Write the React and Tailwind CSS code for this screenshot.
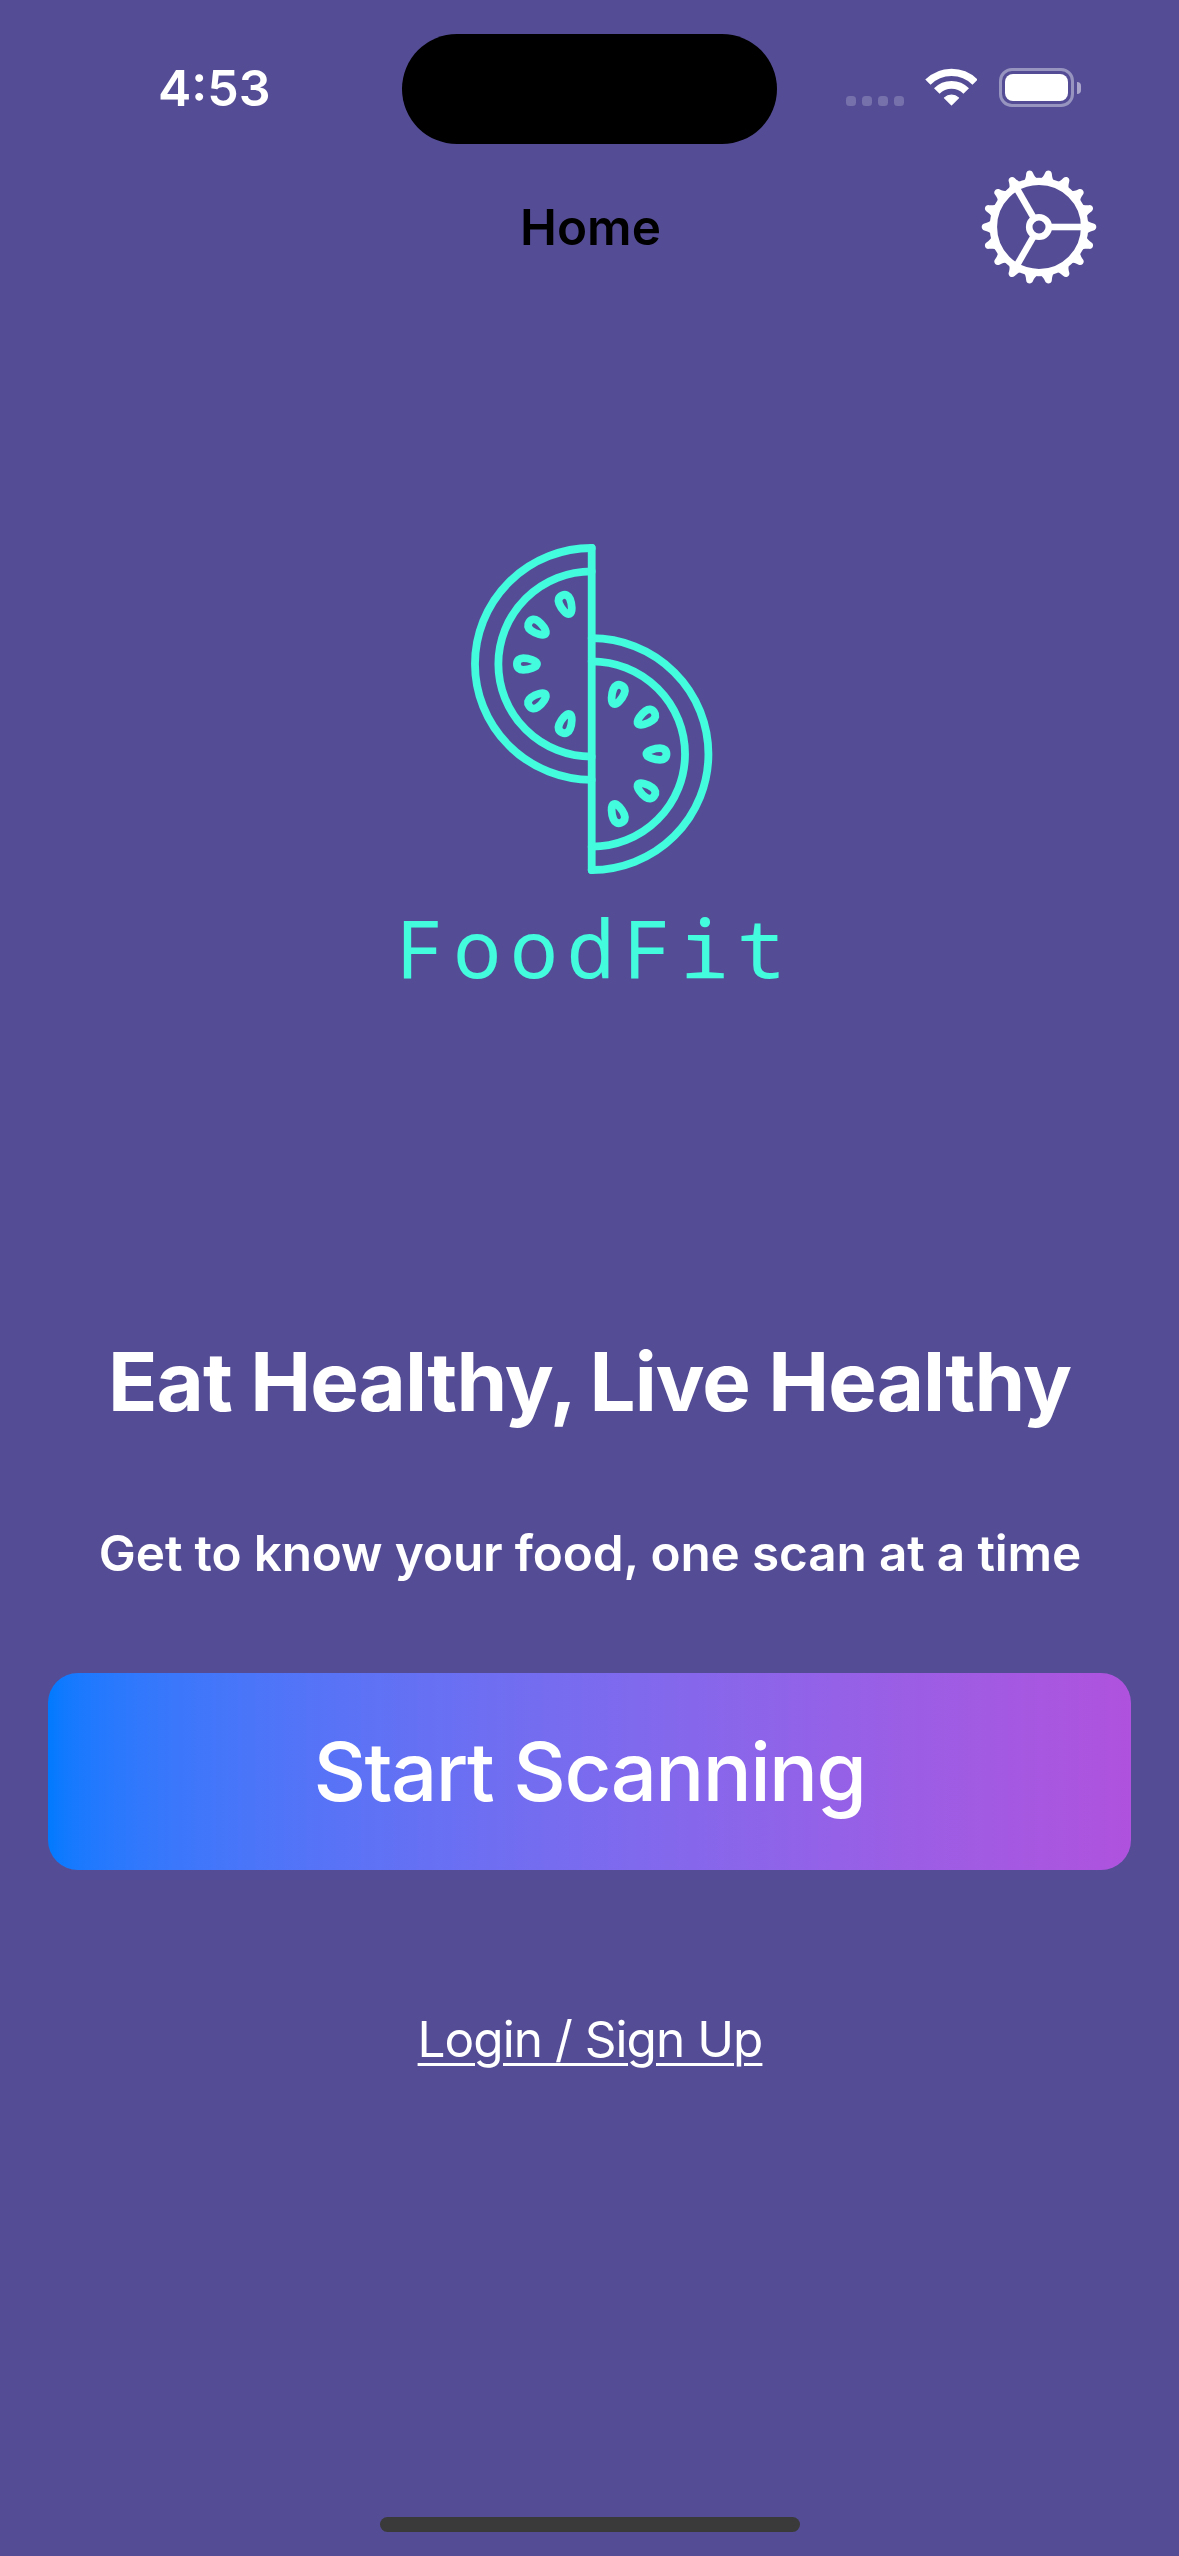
import React from "react";

const TEETH = Array.from({ length: 18 }, (_, i) => i * 20);

const SEEDS = [
  { x: 566, y: 604.6, angle: 68 },
  { x: 537.4, y: 627.8, angle: 36 },
  { x: 527, y: 664, angle: 0 },
  { x: 537.4, y: 700.2, angle: -36 },
  { x: 566, y: 723.4, angle: -68 },
];

function SignalDots() {
  return (
    <div className="flex gap-1.5">
      {[0, 1, 2, 3].map((i) => (
        <span key={i} className="size-2.5 rounded-[3.5px] bg-white/20" />
      ))}
    </div>
  );
}

function WifiIcon() {
  return (
    <svg className="h-[38px] w-[52px]" viewBox="-26.5 -37.5 52 38" fill="none" stroke="white">
      <path d="M-23.6 -23.3A33.2 33.2 0 0 1 23.6 -23.3" strokeWidth="7.4" />
      <path d="M-14.7 -14.5A20.6 20.6 0 0 1 14.7 -14.5" strokeWidth="7.8" />
      <path
        d="M0 -0.7L-7 -7.6A10.4 10.4 0 0 1 7 -7.6Z"
        fill="white"
        strokeWidth="1.2"
        strokeLinejoin="round"
      />
    </svg>
  );
}

function BatteryIcon() {
  return (
    <div className="flex items-center gap-[3px]">
      <div className="h-[39px] w-[75px] rounded-[13px] border-[3px] border-white/40 p-[3px]">
        <div className="h-[27px] w-[63px] rounded-[8px] bg-white" />
      </div>
      <div className="h-3 w-1 rounded-r-full bg-white/50" />
    </div>
  );
}

function GearIcon() {
  return (
    <svg className="size-[116px]" viewBox="-58 -58 116 116" fill="none" stroke="white">
      <circle r="45.6" strokeWidth="7.4" />
      <circle r="9.8" strokeWidth="6.6" />
      {[0, 120, 240].map((a) => (
        <path key={a} d="M12 0H43" strokeWidth="6.6" transform={`rotate(${a})`} />
      ))}
      {TEETH.map((a) => (
        <path
          key={a}
          transform={`rotate(${a})`}
          fill="white"
          stroke="none"
          d="M47 -7.4C49.5 -5.2 51 -4.3 54.6 -3.4C58.2 -2.6 58.2 2.6 54.6 3.4C51 4.3 49.5 5.2 47 7.4Z"
        />
      ))}
    </svg>
  );
}

function MelonHalf({ transform }) {
  return (
    <g transform={transform}>
      <path d="M591.8 548A116.8 115.9 0 0 0 591.8 779.8" />
      <path d="M591.8 571.3A93.4 92.7 0 0 0 591.8 756.7" />
      {SEEDS.map((s) => (
        <path
          key={s.y}
          transform={`translate(${s.x} ${s.y}) rotate(${s.angle})`}
          d="M10.1 0C10.1 3.4 1.8 5.9 -3.6 5.9C-7.6 5.9 -10 3.8 -10 0C-10 -3.8 -7.6 -5.9 -3.6 -5.9C1.8 -5.9 10.1 -3.4 10.1 0Z"
        />
      ))}
    </g>
  );
}

function Logo() {
  return (
    <svg
      className="h-[332px] w-[244px]"
      viewBox="470.1 543 244 332"
      fill="none"
      stroke="#43fbdd"
      strokeWidth="7.8"
      strokeLinejoin="round"
      strokeLinecap="round"
    >
      <MelonHalf />
      <MelonHalf transform="rotate(180 591.8 709)" />
      <path d="M591.8 548V870" />
    </svg>
  );
}

export default function App() {
  return (
    <div className="flex h-[2556px] w-[1179px] flex-col items-center bg-[#544d96] font-['Inter',sans-serif] text-white">
      <header className="grid h-[144px] w-full grid-cols-[402px_375px_402px] pt-[34px]">
        <div className="flex h-[108px] items-center pl-[158px] text-[50px] leading-none font-semibold">
          4:53
        </div>
        <div className="h-[110px] rounded-full bg-black" />
        <div className="flex h-[108px] items-start pt-[34px] pl-[69px]">
          <div className="pt-7">
            <SignalDots />
          </div>
          <div className="ml-[21px]">
            <WifiIcon />
          </div>
          <div className="ml-[22px]">
            <BatteryIcon />
          </div>
        </div>
      </header>

      <nav className="grid h-[166px] w-full grid-cols-3 items-center">
        <span />
        <h1 className="pt-px pl-[2px] text-center text-[49.5px] leading-none font-semibold text-black">
          Home
        </h1>
        <button className="justify-self-end pr-[82px]" aria-label="Settings">
          <GearIcon />
        </button>
      </nav>

      <main className="flex w-full flex-col items-center px-12 pt-[233px]">
        <div className="ml-1">
          <Logo />
        </div>
        <div className="mt-[22px] ml-[11px] h-[100px] font-['Noto_Sans_Mono','Liberation_Mono',monospace] text-[80.5px] leading-[100px] tracking-[8.5px] text-[#43fbdd]">
          FoodFit
        </div>

        <h2 className="mt-[335px] text-[81.5px] leading-[100px] font-bold tracking-[-0.93px] whitespace-nowrap">
          Eat Healthy,<span className="[word-spacing:-5px]"> Live</span> Healthy
        </h2>
        <p className="mt-[91px] ml-px text-[49.5px] leading-[60px] font-semibold tracking-[-0.15px] whitespace-nowrap">
          Get to know your food, one scan at a time
        </p>
        <button className="mt-[90px] flex h-[197px] w-full items-center justify-center rounded-[30px] bg-linear-to-r from-[#007aff] to-[#af52de] text-[81.5px] leading-none font-medium tracking-[-1.6px]">
          Start Scanning
        </button>
        <a className="mt-[139px] ml-px text-[49.5px] leading-[60px] tracking-[-0.97px] underline decoration-[3px] underline-offset-[6px]">
          Login / Sign Up
        </a>
      </main>

      <div className="mt-auto mb-6 h-[15px] w-[420px] rounded-full bg-[#3a3a3a]" />
    </div>
  );
}
